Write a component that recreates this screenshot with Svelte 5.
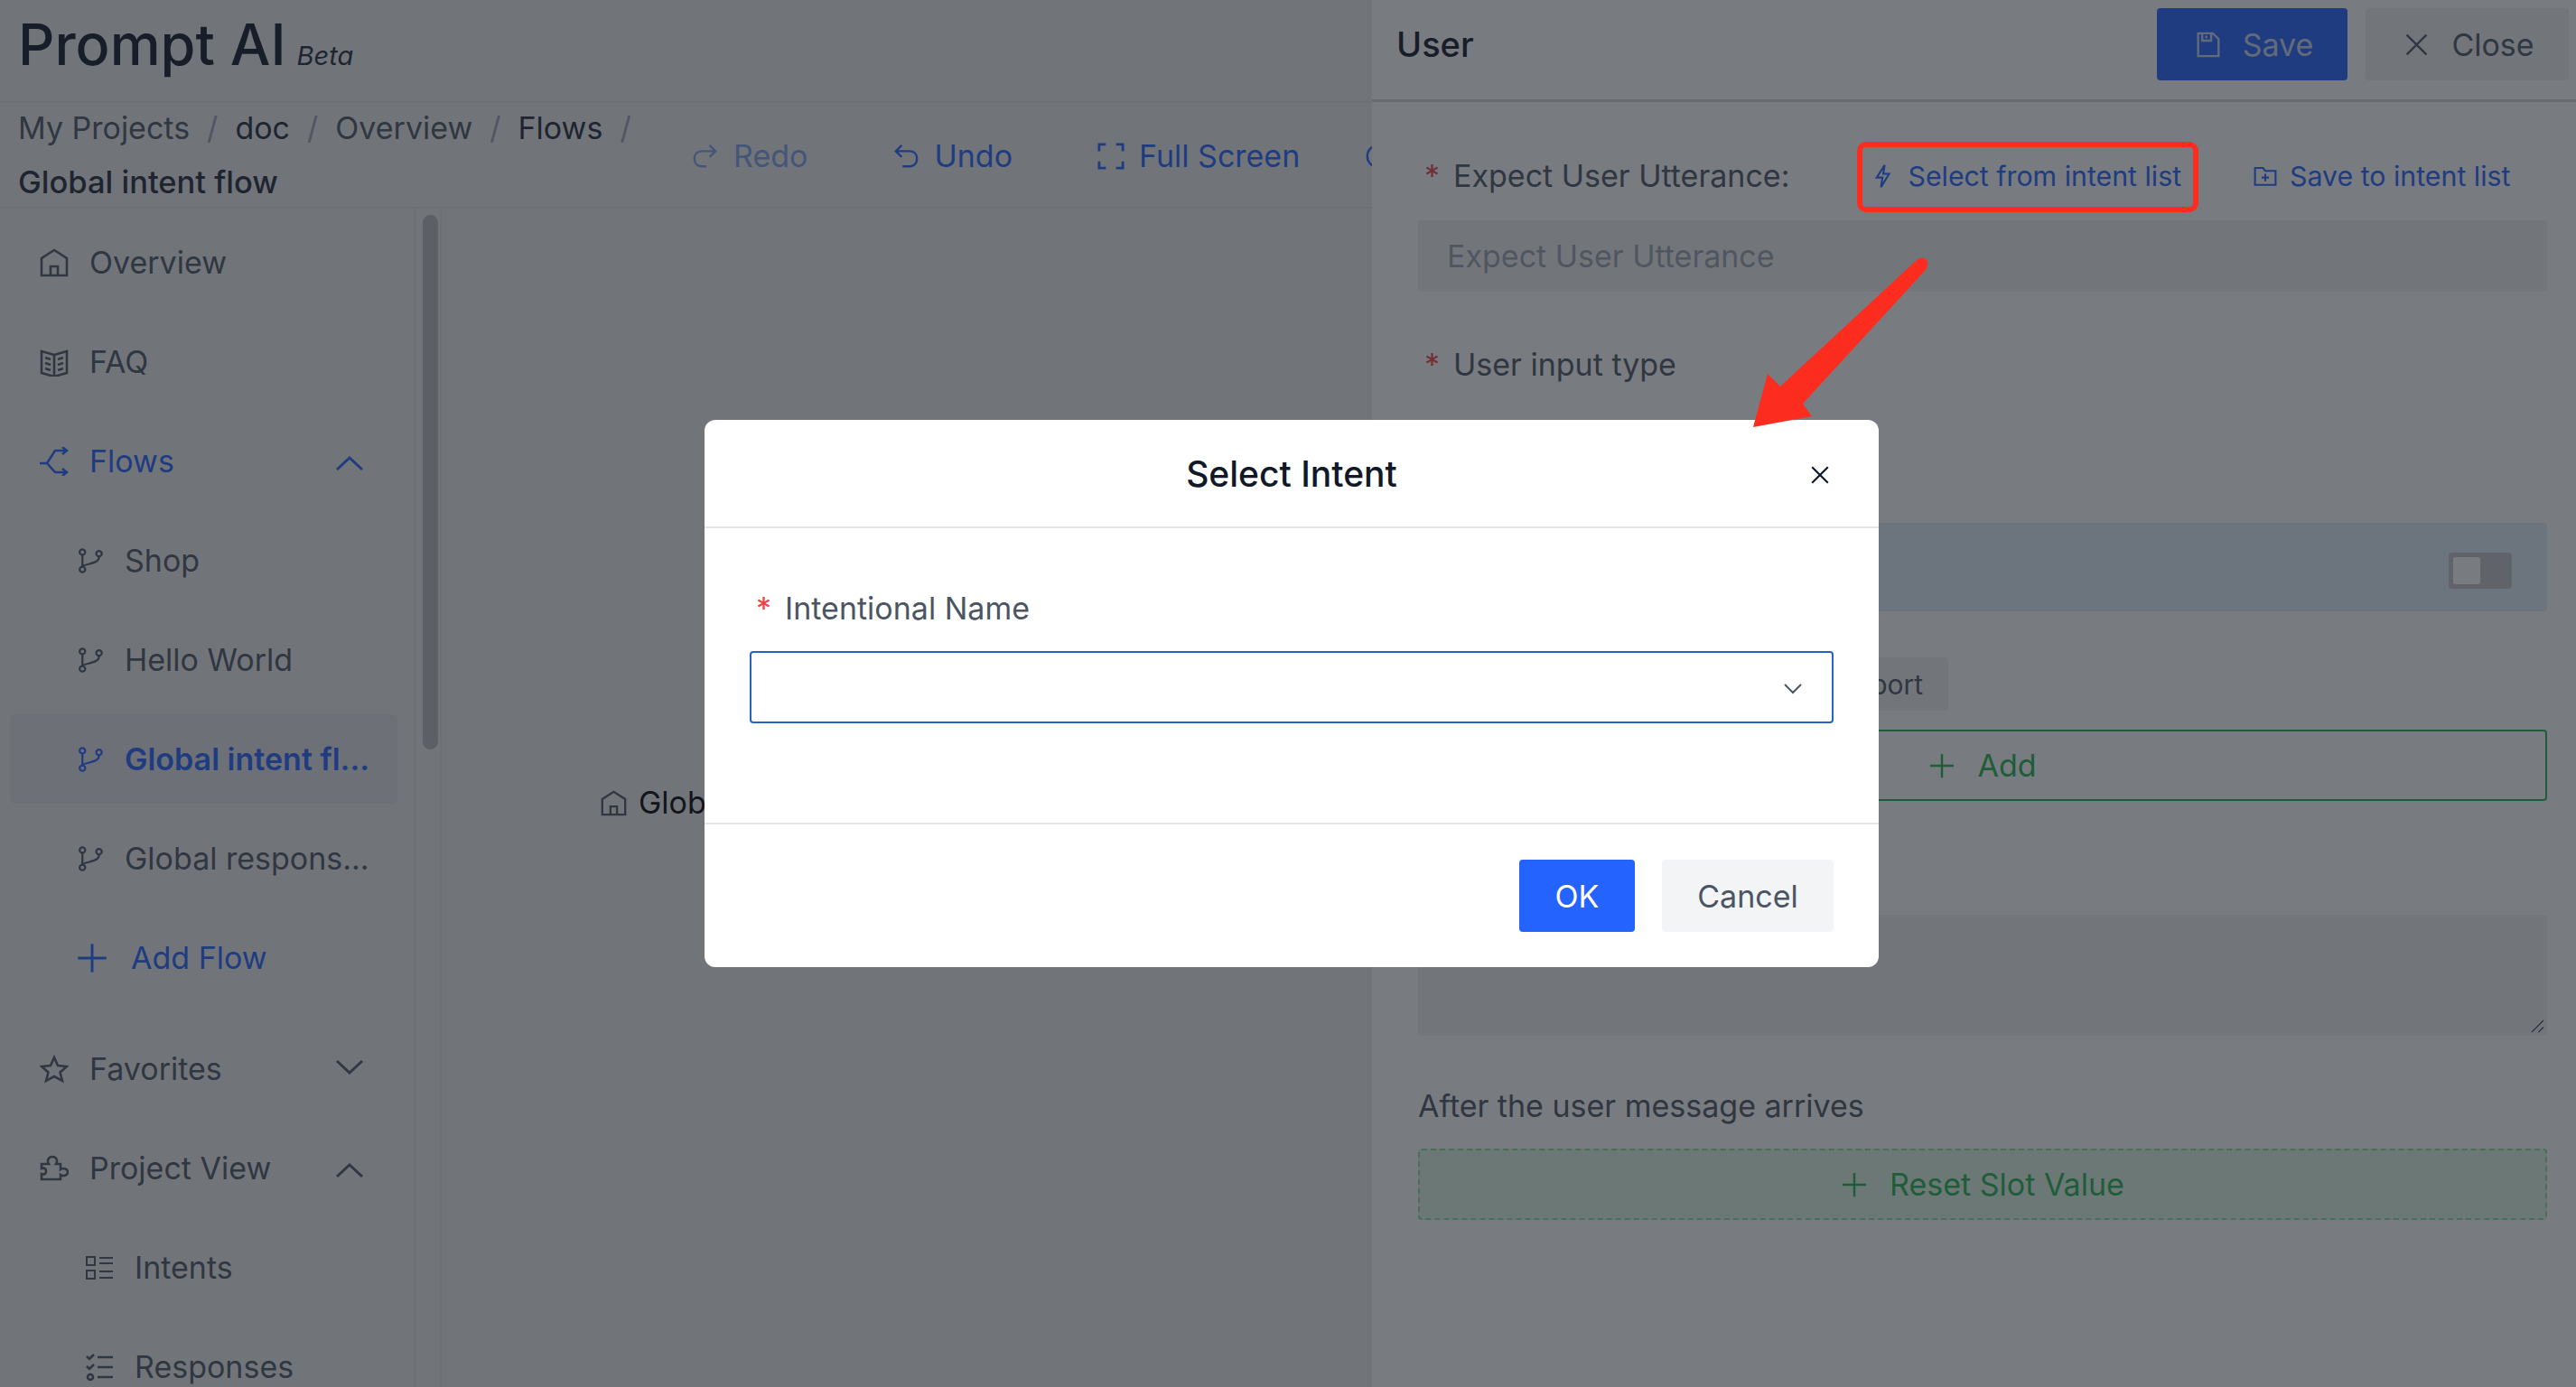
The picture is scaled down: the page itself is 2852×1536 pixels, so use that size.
<script>
  const topItems = [
    { label: "Overview", icon: "home" },
    { label: "FAQ", icon: "book" },
    { label: "Flows", icon: "flows", active: true, chevron: "up" },
  ];
  const flows = [
    { label: "Shop" },
    { label: "Hello World" },
    { label: "Global intent fl...", selected: true },
    { label: "Global respons..." },
  ];
</script>

{#snippet icon(name)}
  <svg class="icon" viewBox="0 0 32 32" fill="none" stroke="currentColor" stroke-width="2.6">
    {#if name === "home"}
      <path d="M2 30V11L16 2l14 9v19z" /><path d="M12 30V20h8v10" />
    {:else if name === "book"}
      <path d="M2 4l14 4 14-4v24l-14 4-14-4z" /><path d="M16 8v24M6 11l6 2M6 17l6 2M6 23l6 2M26 11l-6 2M26 17l-6 2M26 23l-6 2" />
    {:else if name === "flows"}
      <path d="M0 18h8l9-14h12M8 18l9 10h12M25 0l5 4-5 4M25 24l5 4-5 4" />
    {:else if name === "branch"}
      <circle cx="6" cy="5" r="3.500" /><circle cx="6" cy="27" r="3.500" /><circle cx="27" cy="7" r="3.500" />
      <path d="M6 9v14M27 11c0 6-6 7-12 9-5 1-9 2-9 4" />
    {:else if name === "plus"}
      <path d="M2 16h28M16 2v28" />
    {:else if name === "star"}
      <path d="M16 3l4 9 10 1-7.500 6.500L25 29l-9-5-9 5 2.500-9.500L2 13l10-1z" />
    {:else if name === "puzzle"}
      <path d="M2 11h8c-2-3-1-8 4-8s6 5 4 8h5v6c3-2 8-1 8 3s-5 5-8 3v5H2v-6c3 1 5 0 5-3s-2-4-5-3z" />
    {:else if name === "list"}
      <path d="M2 4h9v9H2zM2 19h9v9H2zM16 5h15M16 11h15M16 20h15M16 27h15" stroke-width="2" />
    {:else if name === "checks"}
      <path d="M14 5h17M14 16h17M14 27h17M2 4l3 3 5-5M2 15l3 3 5-5" /><circle cx="6" cy="27" r="3" />
    {:else if name === "redo"}
      <path d="M28 10H12C6 10 3 14 3 19s3 9 9 9h5M21 3l7 7-7 7" />
    {:else if name === "undo"}
      <path d="M4 10h16c6 0 9 4 9 9s-3 9-9 9h-8M11 3l-7 7 7 7" />
    {:else if name === "fullscreen"}
      <path d="M2 10V2h8M22 2h8v8M30 22v8h-8M10 30H2v-8" stroke-width="3" />
    {:else if name === "circle"}
      <circle cx="16" cy="16" r="13" />
    {:else if name === "save"}
      <path d="M4 2h18l7 7v21H4zM9 2v9h11V2M14 5v3" />
    {:else if name === "close"}
      <path d="M4 4l24 24M28 4L4 28" />
    {:else if name === "bolt"}
      <path d="M18 1L7 18h8l-2 13 11-18h-8z" />
    {:else if name === "folder-plus"}
      <path d="M2 5h11l3 4h14v19H2zM16 13v10M11 18h10" />
    {/if}
  </svg>
{/snippet}

<div class="page">
  <div class="main">
    <header class="brand">
      <h1>Prompt AI</h1>
      <em>Beta</em>
    </header>

    <div class="toolbar-row">
      <nav class="crumbs">
        <span class="crumb">My Projects</span><i>/</i>
        <span class="crumb dark">doc</span><i>/</i>
        <span class="crumb">Overview</span><i>/</i>
        <span class="crumb dark">Flows</span><i>/</i>
        <span class="crumb dark current">Global intent flow</span>
      </nav>
      <div class="tools">
        <button class="tool off">{@render icon("redo")}Redo</button>
        <button class="tool">{@render icon("undo")}Undo</button>
        <button class="tool">{@render icon("fullscreen")}Full Screen</button>
        <button class="tool more">{@render icon("circle")}</button>
      </div>
    </div>

    <div class="body">
      <aside class="sidebar">
        {#each topItems as item}
          <div class="row" class:active={item.active}>
            {@render icon(item.icon)}
            <span class="label">{item.label}</span>
            {#if item.chevron}
              <svg class="chevron up" viewBox="0 0 32 18" fill="none" stroke="currentColor" stroke-width="3"><path d="M2 16L16 3l14 13" /></svg>
            {/if}
          </div>
        {/each}
        {#each flows as flow}
          <div class="row sub" class:selected={flow.selected}>
            {@render icon("branch")}
            <span class="label">{flow.label}</span>
          </div>
        {/each}
        <div class="row sub add">
          {@render icon("plus")}
          <span class="label">Add Flow</span>
        </div>

        <div class="row group">
          {@render icon("star")}
          <span class="label">Favorites</span>
          <svg class="chevron down" viewBox="0 0 32 18" fill="none" stroke="currentColor" stroke-width="3"><path d="M2 3l14 13L30 3" /></svg>
        </div>
        <div class="row">
          {@render icon("puzzle")}
          <span class="label">Project View</span>
          <svg class="chevron up" viewBox="0 0 32 18" fill="none" stroke="currentColor" stroke-width="3"><path d="M2 16L16 3l14 13" /></svg>
        </div>
        <div class="row leaf">
          {@render icon("list")}
          <span class="label">Intents</span>
        </div>
        <div class="row leaf">
          {@render icon("checks")}
          <span class="label">Responses</span>
        </div>
      </aside>
      <div class="track"><div class="thumb"></div></div>
      <div class="canvas">
        <div class="node">{@render icon("home")}<span>Global intent flow</span></div>
      </div>
    </div>
  </div>

  <section class="panel">
    <div class="panel-head">
      <h2>User</h2>
      <button class="btn primary">{@render icon("save")}Save</button>
      <button class="btn plain">{@render icon("close")}Close</button>
    </div>
    <div class="panel-body">
      <div class="label-row">
        <span class="req">*</span>
        <span class="field-label">Expect User Utterance:</span>
        <span class="link first">{@render icon("bolt")}Select from intent list</span>
        <span class="link">{@render icon("folder-plus")}Save to intent list</span>
      </div>
      <div class="input">Expect User Utterance</div>

      <div class="type-label"><span class="req">*</span><span class="field-label">User input type</span></div>

      <div class="switch-row"><div class="switch"><div class="knob"></div></div></div>

      <button class="import">Import</button>
      <button class="add-btn">{@render icon("plus")}Add</button>

      <div class="textarea">
        <svg class="grip" viewBox="0 0 16 16" fill="none" stroke="currentColor" stroke-width="1.200"><path d="M1 15L15 1M9 15l6-6" /></svg>
      </div>

      <div class="after">After the user message arrives</div>
      <button class="reset-btn">{@render icon("plus")}Reset Slot Value</button>
    </div>
  </section>

  <div class="overlay">
    <div class="modal">
      <div class="modal-head">
        <h3>Select Intent</h3>
        <svg class="modal-close" viewBox="0 0 20 20" fill="none" stroke="currentColor" stroke-width="2"><path d="M2 2l16 16M18 2L2 18" /></svg>
      </div>
      <div class="modal-body">
        <div class="modal-label"><span class="req">*</span>Intentional Name</div>
        <div class="select">
          <svg viewBox="0 0 20 12" fill="none" stroke="currentColor" stroke-width="2"><path d="M1 1l9 9 9-9" /></svg>
        </div>
      </div>
      <div class="modal-foot">
        <button class="ok">OK</button>
        <button class="cancel">Cancel</button>
      </div>
    </div>
  </div>

  <div class="callout"></div>
  <svg class="arrow" viewBox="0 0 2852 1536">
    <path d="M2122 288Q2130 282 2134 290Q2135 296 2130 301L1996 447L2006 461L1941 473L1957 414L1971 428z" fill="#fc2d1e" />
  </svg>
</div>

<style>
  :global(body) {
    margin: 0;
    background: #fff;
    font-family: Inter, "Noto Sans", sans-serif;
  }

  .page {
    position: relative;
    display: flex;
    height: 100vh;
    overflow: hidden;
    color: #4b5563;
    font-size: 34px;
  }

  button {
    font: inherit;
    border: 0;
    background: none;
    padding: 0;
    color: inherit;
  }

  .icon {
    flex: none;
    width: 30px;
    height: 30px;
  }

  .main {
    width: 1519px;
    flex: none;
    display: flex;
    flex-direction: column;
    background: #eeeff0;
    overflow: hidden;
  }

  .brand {
    height: 112px;
    flex: none;
    display: flex;
    align-items: baseline;
    gap: 12px;
    padding-left: 20px;
    border-bottom: 2px solid #e4e5e7;
    box-sizing: content-box;
    color: #111827;
  }

  .brand h1 {
    margin: 14px 0 0;
    font-size: 63px;
    font-weight: 500;
    line-height: 70px;
  }

  .brand em {
    font-size: 29px;
    color: #1f2937;
  }

  .toolbar-row {
    height: 115px;
    flex: none;
    display: flex;
    border-bottom: 2px solid #e4e5e7;
  }

  .crumbs {
    width: 766px;
    flex: none;
    padding: 0 40px 0 20px;
    box-sizing: border-box;
    line-height: 60px;
    display: flex;
    flex-wrap: wrap;
    align-items: center;
    align-content: center;
  }

  .crumbs i {
    font-style: normal;
    margin: 0 19px;
    color: #9ca3af;
  }

  .crumb.dark {
    color: #1f2937;
  }

  .crumb.current {
    font-weight: 500;
    font-size: 34.500px;
  }

  .tools {
    display: flex;
    align-items: center;
    gap: 94px;
    padding-top: 2px;
    white-space: nowrap;
  }

  .tool {
    display: flex;
    align-items: center;
    gap: 16px;
    color: #2563ff;
  }

  .tool.off {
    color: #7ea3e8;
  }

  .tool.more {
    margin-left: -22px;
  }

  .body {
    flex: 1;
    display: flex;
    min-height: 0;
  }

  .sidebar {
    width: 460px;
    flex: none;
    box-sizing: border-box;
    padding: 10px 0 0 11px;
    border-right: 2px solid #e4e5e7;
    display: flex;
    flex-direction: column;
    gap: 11px;
    overflow: hidden;
  }

  .row {
    flex: none;
    width: 429px;
    height: 99px;
    box-sizing: border-box;
    padding-left: 33px;
    display: flex;
    align-items: center;
    gap: 23px;
    border-radius: 6px;
    position: relative;
  }

  .row .icon {
    width: 32px;
    height: 32px;
  }

  .row.active,
  .row.add {
    color: #2563ff;
  }

  .row.sub {
    padding-left: 75px;
    gap: 24px;
  }

  .row.sub .icon {
    width: 28px;
    height: 28px;
  }

  .row.add {
    padding-left: 73px;
    gap: 25px;
  }

  .row.add .icon {
    width: 36px;
    height: 36px;
  }

  .row.selected {
    background: #e3e4e6;
    color: #2563ff;
    font-weight: 600;
  }

  .row.group {
    margin-top: 13px;
  }

  .row.leaf {
    padding-left: 83px;
    gap: 23px;
  }

  .label {
    white-space: nowrap;
  }

  .chevron {
    position: absolute;
    left: 360px;
    width: 32px;
    height: 18px;
  }

  .chevron.up {
    margin-top: 4px;
  }

  .chevron.down {
    margin-top: -5px;
  }

  .track {
    width: 29px;
    flex: none;
    padding: 7px 0 0 8px;
    box-sizing: border-box;
    border-right: 2px solid #e4e5e7;
  }

  .thumb {
    width: 17px;
    height: 592px;
    border-radius: 9px;
    background: #b9babd;
  }

  .canvas {
    flex: 1;
    padding: 638px 0 0 176px;
    white-space: nowrap;
  }

  .node {
    display: flex;
    align-items: center;
    gap: 13px;
    color: #000;
    line-height: 40px;
  }

  .node .icon {
    width: 29px;
    height: 29px;
    color: #4b5563;
  }

  .panel {
    flex: 1;
    min-width: 0;
    background: #fff;
  }

  .panel-head {
    padding: 9px 8px 0 27px;
    display: flex;
    gap: 20px;
    border-bottom: 3px solid #d5d6d9;
    height: 101px;
  }

  .panel-head h2 {
    flex: 1;
    margin: 0;
    font-size: 38px;
    font-weight: 500;
    line-height: 80px;
    color: #111827;
  }

  .btn {
    height: 80px;
    padding-left: 4px;
    box-sizing: border-box;
    display: flex;
    align-items: center;
    justify-content: center;
    gap: 24px;
    border-radius: 4px;
  }

  .btn .icon {
    width: 29px;
    height: 29px;
  }

  .btn.primary {
    width: 211px;
    background: #2563ff;
    color: #c9d6ee;
  }

  .btn.plain {
    width: 225px;
    background: #f1f2f3;
  }

  .panel-body {
    padding: 0 32px 0 51px;
  }

  .label-row {
    height: 131px;
    padding-top: 32px;
    box-sizing: border-box;
    display: flex;
    align-items: center;
    white-space: nowrap;
  }

  .req {
    color: #ef4444;
    margin-right: 15px;
    margin-left: 7px;
  }

  .link {
    display: flex;
    align-items: center;
    gap: 14px;
    color: #2563ff;
    font-size: 30.300px;
    margin-left: 80px;
  }

  .link.first {
    margin-left: 91px;
  }

  .link .icon {
    width: 26px;
    height: 28px;
  }

  .input {
    height: 79px;
    background: #f1f2f3;
    border-radius: 4px;
    line-height: 79px;
    padding-left: 32px;
    color: #9ca3af;
  }

  .type-label {
    margin-top: 50px;
    height: 62px;
    line-height: 62px;
  }

  .switch-row {
    margin-top: 144px;
    height: 98px;
    background: #e1edfa;
    border-radius: 4px;
    display: flex;
    align-items: center;
    justify-content: flex-end;
    padding-right: 39px;
  }

  .switch {
    width: 70px;
    height: 40px;
    margin-top: 8px;
    padding: 5px;
    box-sizing: border-box;
    background: #c3c4c9;
    border-radius: 4px;
  }

  .knob {
    width: 30px;
    height: 30px;
    background: #fff;
    border-radius: 3px;
  }

  .import {
    display: block;
    margin: 51px 663px 0 auto;
    width: 148px;
    height: 59px;
    background: #f1f2f3;
    border-radius: 4px;
    font-size: 30px;
    text-align: center;
  }

  .add-btn,
  .reset-btn {
    display: flex;
    align-items: center;
    justify-content: center;
    gap: 24px;
    width: 100%;
    height: 79px;
    box-sizing: border-box;
    border-radius: 4px;
    color: #22b552;
  }

  .add-btn {
    margin-top: 21px;
    border: 2px solid #22b552;
  }

  .reset-btn {
    margin-top: 22px;
    background: #e1f8e5;
    border: 2px dashed #8fdca6;
  }

  .textarea {
    position: relative;
    margin-top: 126px;
    height: 134px;
    background: #f1f2f3;
    border-radius: 4px;
  }

  .grip {
    position: absolute;
    right: 3px;
    bottom: 3px;
    width: 15px;
    height: 15px;
    color: #1f2937;
  }

  .after {
    margin-top: 53px;
    height: 50px;
    line-height: 50px;
  }

  .overlay {
    position: absolute;
    inset: 0;
    background: rgba(30, 35, 43, 0.6);
    display: flex;
    align-items: center;
    justify-content: center;
    padding-left: 8px;
  }

  .modal {
    width: 1300px;
    height: 606px;
    display: flex;
    flex-direction: column;
    background: #fff;
    border-radius: 12px;
  }

  .modal-head {
    height: 118px;
    flex: none;
    display: flex;
    align-items: center;
    justify-content: center;
    position: relative;
    border-bottom: 2px solid #e5e7eb;
  }

  .modal-head h3 {
    margin: 0;
    font-size: 39px;
    font-weight: 500;
    color: #111827;
  }

  .modal-close {
    position: absolute;
    right: 54px;
    top: 50px;
    width: 22px;
    height: 22px;
    color: #111827;
  }

  .modal-body {
    flex: 1;
    padding: 67px 50px 0;
  }

  .modal-label {
    line-height: 44px;
  }

  .select {
    margin-top: 25px;
    height: 80px;
    box-sizing: border-box;
    border: 2px solid #2563c4;
    border-radius: 4px;
    display: flex;
    align-items: center;
    justify-content: flex-end;
    padding-right: 33px;
    box-shadow: 0 2px 6px rgba(37, 99, 196, 0.05);
  }

  .select svg {
    width: 20px;
    height: 12px;
    margin-top: 4px;
  }

  .modal-foot {
    height: 160px;
    flex: none;
    box-sizing: border-box;
    border-top: 2px solid #e5e7eb;
    padding: 39px 50px 0;
    display: flex;
    justify-content: flex-end;
    gap: 30px;
  }

  .ok,
  .cancel {
    height: 80px;
    border-radius: 4px;
  }

  .ok {
    width: 128px;
    background: #2563ff;
    color: #fff;
  }

  .cancel {
    width: 190px;
    background: #f3f4f6;
  }

  .callout {
    position: absolute;
    left: 2056px;
    top: 157px;
    width: 378px;
    height: 78px;
    box-sizing: border-box;
    border: 6px solid #fc2d1e;
    border-radius: 10px;
  }

  .arrow {
    position: absolute;
    inset: 0;
    width: 2852px;
    height: 1536px;
    pointer-events: none;
  }
</style>
